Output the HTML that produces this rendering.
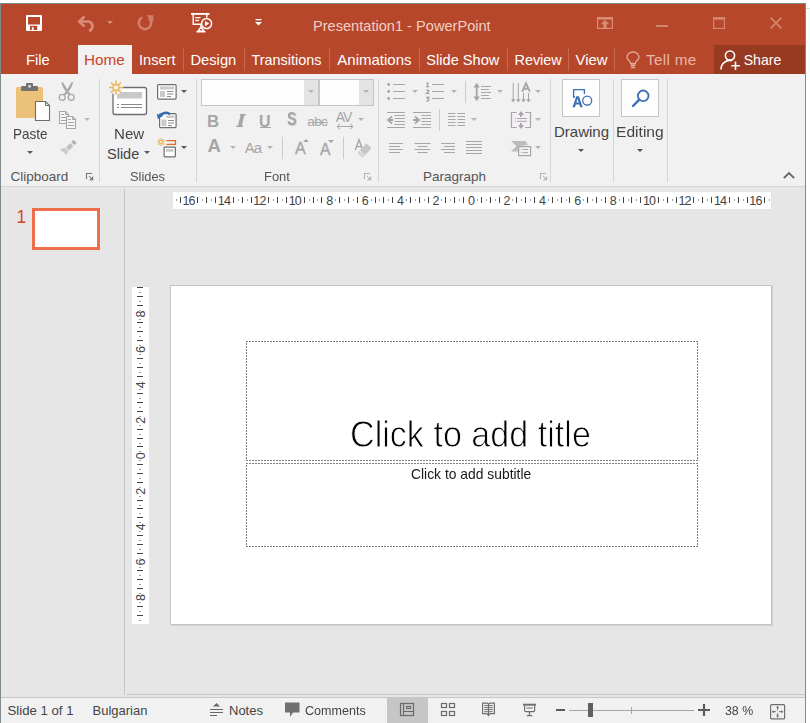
<!DOCTYPE html>
<html><head><meta charset="utf-8">
<style>
html,body{margin:0;padding:0}
body{width:810px;height:723px;overflow:hidden;position:relative;background:#fff;font-family:"Liberation Sans",sans-serif}
.a{position:absolute}
.t{position:absolute;white-space:nowrap;line-height:1}
svg{position:absolute;overflow:visible}
</style></head><body>
<!-- window frame -->
<div class="a" style="left:0;top:3px;width:806px;height:1px;background:#7f8a8c"></div>
<div class="a" style="left:0;top:3px;width:1px;height:720px;background:#7f8a8c"></div>
<div class="a" style="left:805px;top:3px;width:1px;height:720px;background:#7f8a8c"></div>
<div class="a" style="left:806px;top:8px;width:4px;height:1px;background:#dadada"></div>
<!-- title bar + tabs -->
<div class="a" style="left:1px;top:4px;width:804px;height:70px;background:#b7472a"></div>
<!-- ribbon -->
<div class="a" style="left:1px;top:74px;width:804px;height:112px;background:#f1f1f1"></div>
<div class="a" style="left:1px;top:186px;width:804px;height:1px;background:#d5d5d5"></div>
<!-- workspace -->
<div class="a" style="left:1px;top:187px;width:804px;height:510px;background:#e6e6e6"></div>
<div class="a" style="left:124px;top:189px;width:1px;height:506px;background:#c6c6c6"></div>
<div class="a" style="left:127px;top:694px;width:678px;height:1px;background:#c6c6c6"></div>
<!-- status bar -->
<div class="a" style="left:1px;top:697px;width:804px;height:1px;background:#c6c6c6"></div>
<div class="a" style="left:1px;top:698px;width:804px;height:25px;background:#f1f1f1"></div>


<div class="t" style="left:313px;top:18.5px;font-size:14.6px;color:#f0cfc6">Presentation1 - PowerPoint</div>
<!-- save icon -->
<svg style="left:26px;top:15px" width="16" height="16" viewBox="0 0 16 16">
<rect x="0" y="0" width="16" height="16" rx="1" fill="#fff"/>
<rect x="2" y="2" width="12" height="7.5" fill="#b7472a"/>
<rect x="4" y="10.8" width="7.2" height="4.2" fill="#b7472a"/>
<rect x="5.8" y="12.2" width="1.8" height="2.8" fill="#fff"/>
</svg>
<!-- undo -->
<svg style="left:78px;top:16px" width="19" height="15" viewBox="0 0 19 15">
<path d="M2,5.5 H11 A5,5 0 0 1 11,15" fill="none" stroke="#d98d79" stroke-width="2.6"/>
<path d="M6.5,0.5 L1.2,5.5 L6.5,10.5" fill="none" stroke="#d98d79" stroke-width="2.6"/>
</svg>
<svg style="left:107px;top:21px" width="6" height="3" viewBox="0 0 6 3"><path d="M0,0 H6 L3,3 Z" fill="#d98d79"/></svg>
<!-- repeat -->
<svg style="left:137px;top:15px" width="17" height="16" viewBox="0 0 17 16">
<path d="M12,3.2 A6.2,6.2 0 1 1 5.2,2.4" fill="none" stroke="#cf7f6a" stroke-width="2.6"/>
<path d="M9.2,0.2 H16.3 V7 Z" fill="#cf7f6a"/>
</svg>
<!-- slideshow from start -->
<svg style="left:191px;top:13px" width="22" height="20" viewBox="0 0 22 20">
<rect x="0" y="0" width="18.5" height="1.8" fill="#fff"/>
<path d="M2.2,1.5 V11.3 H10.5 M15.8,1.5 V4.5" fill="none" stroke="#fff" stroke-width="1.4"/>
<rect x="4.2" y="4" width="5.3" height="1.3" fill="#fff"/><rect x="4.2" y="6.8" width="3.8" height="1.3" fill="#fff"/>
<path d="M10,11.5 V14.5" stroke="#fff" stroke-width="1.4"/>
<path d="M7,18.2 L10,14 L13,18.2 Z" fill="none" stroke="#fff" stroke-width="1.5"/>
<path d="M5.5,18.8 H14.5" stroke="#fff" stroke-width="1.4"/>
<circle cx="15.6" cy="10.6" r="5" fill="#b7472a" stroke="#fff" stroke-width="1.5"/>
<path d="M14,7.9 L18.2,10.6 L14,13.3 Z" fill="#fff"/>
</svg>
<!-- customize QAT -->
<svg style="left:255px;top:19px" width="7" height="7" viewBox="0 0 7 7"><rect x="0.5" y="0" width="6" height="1.3" fill="#fff"/><path d="M0,3 H7 L3.5,6.5 Z" fill="#fff"/></svg>
<!-- window controls -->
<svg style="left:597px;top:17px" width="16" height="12" viewBox="0 0 16 12">
<rect x="0.6" y="0.6" width="14.8" height="10.8" fill="none" stroke="#d98d79" stroke-width="1.2"/>
<rect x="1" y="1" width="14" height="1.6" fill="#d98d79"/>
<path d="M8,3 L12.3,7.3 H9.6 V11 H6.4 V7.3 H3.7 Z" fill="#d98d79"/>
</svg>
<div class="a" style="left:656px;top:25px;width:12px;height:2px;background:#d38570"></div>
<svg style="left:713px;top:17px" width="12" height="12" viewBox="0 0 12 12">
<rect x="0.6" y="0.6" width="10.8" height="10.8" fill="none" stroke="#d38570" stroke-width="1.2"/>
<rect x="0.6" y="0.6" width="10.8" height="2.2" fill="#d38570"/>
</svg>
<svg style="left:770px;top:17px" width="12" height="12" viewBox="0 0 12 12">
<path d="M0.7,0.7 L11.3,11.3 M11.3,0.7 L0.7,11.3" stroke="#d38570" stroke-width="1.7"/>
</svg>


<div class="a" style="left:78px;top:45px;width:54px;height:29px;background:#f1f1f1"></div>
<div class="a" style="left:714px;top:45px;width:91px;height:29px;background:#983a22"></div>
<div class="t" style="left:26px;top:53.3px;font-size:14.8px;color:#fff">File</div>
<div class="t" style="left:84px;top:51.8px;font-size:15.3px;color:#c8452a">Home</div>
<div class="t" style="left:139px;top:53.3px;font-size:14.6px;color:#fff">Insert</div>
<div class="t" style="left:190.5px;top:53.3px;font-size:14.7px;color:#fff">Design</div>
<div class="t" style="left:251.5px;top:53.3px;font-size:14.4px;color:#fff">Transitions</div>
<div class="t" style="left:337.3px;top:52px;font-size:15px;color:#fff">Animations</div>
<div class="t" style="left:426.3px;top:53.3px;font-size:14.6px;color:#fff">Slide Show</div>
<div class="t" style="left:514.5px;top:53.3px;font-size:14.4px;color:#fff">Review</div>
<div class="t" style="left:575.5px;top:53.3px;font-size:14.9px;color:#fff">View</div>
<div class="t" style="left:646px;top:51.5px;font-size:15.3px;letter-spacing:0.3px;color:#e9b6a8">Tell me</div>
<div class="t" style="left:743.7px;top:53.3px;font-size:14.1px;color:#fff">Share</div>
<div class="a" style="left:183px;top:48px;width:1px;height:23px;background:#c7694f"></div>
<div class="a" style="left:244px;top:48px;width:1px;height:23px;background:#c7694f"></div>
<div class="a" style="left:329px;top:48px;width:1px;height:23px;background:#c7694f"></div>
<div class="a" style="left:419px;top:48px;width:1px;height:23px;background:#c7694f"></div>
<div class="a" style="left:507px;top:48px;width:1px;height:23px;background:#c7694f"></div>
<div class="a" style="left:568px;top:48px;width:1px;height:23px;background:#c7694f"></div>
<div class="a" style="left:614px;top:48px;width:1px;height:23px;background:#c7694f"></div>
<!-- lightbulb -->
<svg style="left:626px;top:52px" width="14" height="17" viewBox="0 0 14 17">
<path d="M4.6,11.5 C4.6,8.8 1,7.8 1,5.4 A6,5.4 0 0 1 13,5.4 C13,7.8 9.4,8.8 9.4,11.5 Z" fill="none" stroke="#e2a998" stroke-width="1.3"/>
<path d="M4.5,13.2 H9.5" stroke="#e2a998" stroke-width="1.6"/>
<path d="M5,15.4 H9" stroke="#e2a998" stroke-width="1.8"/>
</svg>
<!-- share person -->
<svg style="left:720px;top:50px" width="21" height="20" viewBox="0 0 21 20">
<circle cx="10" cy="5.6" r="4.6" fill="none" stroke="#fff" stroke-width="1.6"/>
<path d="M1,19.5 A9,9 0 0 1 12,10.6" fill="none" stroke="#fff" stroke-width="1.6"/>
<path d="M15.5,11.5 V20 M11.3,15.8 H19.8" stroke="#fff" stroke-width="1.6"/>
</svg>


<!-- group separators -->
<div class="a" style="left:99px;top:79px;width:1px;height:103px;background:#d6d6d6"></div>
<div class="a" style="left:196px;top:79px;width:1px;height:103px;background:#d6d6d6"></div>
<div class="a" style="left:378px;top:79px;width:1px;height:103px;background:#d6d6d6"></div>
<div class="a" style="left:550px;top:79px;width:1px;height:103px;background:#d6d6d6"></div>
<div class="a" style="left:613px;top:79px;width:1px;height:103px;background:#d6d6d6"></div>
<div class="a" style="left:667px;top:79px;width:1px;height:103px;background:#d6d6d6"></div>
<!-- group labels -->
<div class="t" style="left:10.5px;top:170px;font-size:13.5px;color:#555">Clipboard</div>
<div class="t" style="left:130px;top:170px;font-size:13.5px;color:#555;transform:scaleX(.95);transform-origin:0 0">Slides</div>
<div class="t" style="left:264px;top:170px;font-size:13.5px;color:#555;transform:scaleX(.96);transform-origin:0 0">Font</div>
<div class="t" style="left:423px;top:170px;font-size:13.5px;color:#555">Paragraph</div>
<!-- launchers -->
<svg style="left:86px;top:173px" width="8" height="8" viewBox="0 0 8 8"><path d="M0.5,6 V0.5 H6" fill="none" stroke="#747474" stroke-width="1.1"/><path d="M7.2,3 V7.2 H3 Z" fill="#747474"/><path d="M3,3 L5.5,5.5" stroke="#747474" stroke-width="1"/></svg>
<svg style="left:364px;top:173px" width="8" height="8" viewBox="0 0 8 8"><path d="M0.5,6 V0.5 H6" fill="none" stroke="#b4b4b4" stroke-width="1.1"/><path d="M7.2,3 V7.2 H3 Z" fill="#b4b4b4"/><path d="M3,3 L5.5,5.5" stroke="#b4b4b4" stroke-width="1"/></svg>
<svg style="left:540px;top:173px" width="8" height="8" viewBox="0 0 8 8"><path d="M0.5,6 V0.5 H6" fill="none" stroke="#b4b4b4" stroke-width="1.1"/><path d="M7.2,3 V7.2 H3 Z" fill="#b4b4b4"/><path d="M3,3 L5.5,5.5" stroke="#b4b4b4" stroke-width="1"/></svg>
<!-- chevron collapse -->
<svg style="left:783px;top:171px" width="12" height="8" viewBox="0 0 12 8"><path d="M0.8,7.2 L6,2 L11.2,7.2" fill="none" stroke="#666" stroke-width="1.9"/></svg>

<!-- ===== Clipboard ===== -->
<svg style="left:15px;top:82px" width="36" height="40" viewBox="0 0 36 40">
<rect x="1" y="5" width="27" height="31" rx="1.5" fill="#ecc27a"/>
<rect x="6" y="4" width="17" height="5" rx="1" fill="#737373"/>
<rect x="11" y="1" width="7" height="5" rx="0.8" fill="#737373"/>
<rect x="13.4" y="3.2" width="2.4" height="2.2" fill="#f1f1f1"/>
<path d="M20.5,19.5 H30.5 L34.5,23.5 V38.5 H20.5 Z" fill="#fff" stroke="#6d6d6d" stroke-width="1.1"/>
<path d="M30.5,19.5 V23.5 H34.5" fill="none" stroke="#6d6d6d" stroke-width="1"/>
</svg>
<div class="t" style="left:13px;top:126.5px;font-size:14.5px;color:#444;transform:scaleX(.93);transform-origin:0 0">Paste</div>
<svg style="left:27px;top:151px" width="6" height="3" viewBox="0 0 6 3"><path d="M0,0 H6 L3,3 Z" fill="#5a5a5a"/></svg>
<!-- scissors -->
<svg style="left:58px;top:82px" width="18" height="20" viewBox="0 0 18 20">
<circle cx="4.2" cy="15.3" r="3" fill="none" stroke="#a6a6a6" stroke-width="1.3"/>
<circle cx="13.2" cy="15.3" r="3" fill="none" stroke="#a6a6a6" stroke-width="1.3"/>
<path d="M3.8,0.8 Q5,6.5 11.2,13 L12,12 Q7.5,6 4.6,0.5 Z M14.6,0.8 Q13.4,6.5 7.2,13 L6.4,12 Q10.9,6 13.8,0.5 Z" fill="#a6a6a6" stroke="#a6a6a6" stroke-width="0.9"/>
</svg>
<!-- copy -->
<svg style="left:58px;top:110px" width="20" height="20" viewBox="0 0 20 20">
<path d="M1.5,1.5 H7.5 L10.5,4.5 V13.5 H1.5 Z" fill="#f8f5f8" stroke="#a6a6a6" stroke-width="1.1"/>
<path d="M7.5,1.5 V4.5 H10.5" fill="none" stroke="#a6a6a6" stroke-width="1"/>
<path d="M3,4.5 H6 M3,7.5 H8 M3,10.5 H8" stroke="#a6a6a6" stroke-width="1"/>
<path d="M8.5,6.5 H14.5 L17.5,9.5 V18.5 H8.5 Z" fill="#f8f5f8" stroke="#a6a6a6" stroke-width="1.1"/>
<path d="M14.5,6.5 V9.5 H17.5" fill="none" stroke="#a6a6a6" stroke-width="1"/>
<path d="M10,9.5 H13 M10,12.5 H16 M10,15.5 H16" stroke="#a6a6a6" stroke-width="1"/>
</svg>
<svg style="left:84px;top:118px" width="6" height="3" viewBox="0 0 6 3"><path d="M0,0 H6 L3,3 Z" fill="#b9b9b9"/></svg>
<!-- format painter -->
<svg style="left:59px;top:139px" width="19" height="17" viewBox="0 0 19 17">
<path d="M14.5,0.8 L17.6,3.9 L15.4,6.1 L12.3,3 Z" fill="#b0b0b0"/>
<path d="M11.2,4 L14.4,7.2 L10,11.6 L6.8,8.4 Z" fill="#c2c2c2"/>
<path d="M6.2,9 L9.4,12.2 L7.2,15.8 L1,10.6 L2,9.8 Z" fill="#cbcbcb"/>
</svg>

<!-- ===== Slides ===== -->
<svg style="left:108px;top:80px" width="40" height="36" viewBox="0 0 40 36">
<rect x="5" y="7.5" width="33.5" height="27" rx="2" fill="#fff" stroke="#6d6d6d" stroke-width="1.3"/>
<rect x="9" y="12" width="25" height="6.5" fill="#c9c9c9"/>
<path d="M9,24.5 H11 M13,24.5 H34 M9,27.5 H11 M13,27.5 H34" stroke="#8a8a8a" stroke-width="1"/>
<circle cx="8" cy="7.5" r="7.2" fill="#f1f1f1"/>
<g stroke="#eeb75c" stroke-width="1.6">
<path d="M8,0.5 V14.5 M1,7.5 H15 M3,2.5 L13,12.5 M13,2.5 L3,12.5"/>
</g>
<circle cx="8" cy="7.5" r="3" fill="#f1f1f1" stroke="#eeb75c" stroke-width="1.4"/>
</svg>
<div class="t" style="left:114px;top:126.7px;font-size:14.5px;color:#444;transform:scaleX(1.04);transform-origin:0 0">New</div>
<div class="t" style="left:107px;top:146.6px;font-size:14.5px;color:#444">Slide</div>
<svg style="left:144px;top:151px" width="6" height="3" viewBox="0 0 6 3"><path d="M0,0 H6 L3,3 Z" fill="#5a5a5a"/></svg>
<!-- layout -->
<svg style="left:157px;top:84px" width="20" height="16" viewBox="0 0 20 16">
<rect x="0.6" y="0.6" width="18.5" height="14.5" rx="1" fill="#fff" stroke="#6d6d6d" stroke-width="1.2"/>
<rect x="3" y="2.5" width="14" height="3" fill="#c9c9c9"/>
<rect x="3" y="7" width="5" height="6" fill="#c9c9c9"/>
<path d="M10,7.5 H16.5 M10,10 H16.5 M10,12.5 H14" stroke="#8a8a8a" stroke-width="1"/>
</svg>
<svg style="left:181px;top:90px" width="6" height="3" viewBox="0 0 6 3"><path d="M0,0 H6 L3,3 Z" fill="#5a5a5a"/></svg>
<!-- reset -->
<svg style="left:157px;top:110px" width="20" height="19" viewBox="0 0 20 19">
<rect x="2.6" y="3.6" width="16.5" height="14" rx="1" fill="#fff" stroke="#6d6d6d" stroke-width="1.2"/>
<rect x="4.5" y="9.5" width="5" height="6.5" fill="#c9c9c9"/>
<rect x="9" y="5.5" width="8.5" height="2.5" fill="#c9c9c9"/>
<path d="M11,10.5 H17 M11,13 H17 M11,15.5 H15" stroke="#8a8a8a" stroke-width="1"/>
<path d="M3.8,6.5 A5.2,4.6 0 0 1 13,4.5" fill="none" stroke="#2f6db5" stroke-width="2.3"/>
<path d="M-0.3,4 L6.2,5.5 L1,9.3 Z" fill="#2f6db5"/>
</svg>
<!-- section -->
<svg style="left:157px;top:138px" width="20" height="20" viewBox="0 0 20 20">
<g stroke="#eeb75c" stroke-width="1.2"><path d="M4,0 V8 M0,4 H8 M1.2,1.2 L6.8,6.8 M6.8,1.2 L1.2,6.8"/></g>
<circle cx="4" cy="4" r="1.6" fill="#f1f1f1" stroke="#eeb75c" stroke-width="1"/>
<path d="M9.5,2.6 H18.5 V6.4 H9.5" fill="none" stroke="#e9671f" stroke-width="1.2"/>
<rect x="7.1" y="9.1" width="11.3" height="9.8" rx="0.8" fill="#fff" stroke="#6d6d6d" stroke-width="1.2"/>
<rect x="9" y="11" width="7.5" height="2.8" fill="#c9c9c9"/>
</svg>
<svg style="left:181px;top:146px" width="6" height="3" viewBox="0 0 6 3"><path d="M0,0 H6 L3,3 Z" fill="#5a5a5a"/></svg>


<!-- ===== Font ===== -->
<div class="a" style="left:201px;top:79px;width:116px;height:25px;border:1px solid #c6c6c6;background:#fdfdfd"></div>
<div class="a" style="left:304px;top:80px;width:14px;height:25px;background:#e3e3e3"></div>
<div class="a" style="left:319px;top:79px;width:53px;height:25px;border:1px solid #c6c6c6;background:#fdfdfd"></div>
<div class="a" style="left:359px;top:80px;width:14px;height:25px;background:#e3e3e3"></div>
<svg style="left:308px;top:90px" width="6" height="3" viewBox="0 0 6 3"><path d="M0,0 H6 L3,3 Z" fill="#b3b3b3"/></svg>
<svg style="left:363px;top:90px" width="6" height="3" viewBox="0 0 6 3"><path d="M0,0 H6 L3,3 Z" fill="#b3b3b3"/></svg>

<div class="t" style="left:207px;top:113.6px;font-size:16.8px;font-weight:bold;color:#a6a6a6">B</div>
<svg style="left:236px;top:114px" width="10" height="13" viewBox="0 0 10 13"><path d="M4,0 H10 L9.7,1.6 H8.3 L5.8,11.4 H7.2 L6.8,13 H0 L0.4,11.4 H2 L4.5,1.6 H3.7 Z" fill="#a6a6a6"/></svg>
<div class="t" style="left:259px;top:113.5px;font-size:16px;font-weight:bold;color:#a6a6a6">U</div>
<div class="a" style="left:260px;top:127px;width:11px;height:1.3px;background:#a6a6a6"></div>
<div class="t" style="left:288.3px;top:111.8px;font-size:17.5px;font-weight:bold;color:#d0d0d0;transform:scaleX(.82);transform-origin:0 0;filter:blur(0.5px)">S</div>
<div class="t" style="left:287px;top:110.5px;font-size:17.5px;font-weight:bold;color:#a6a6a6;transform:scaleX(.82);transform-origin:0 0">S</div>
<div class="t" style="left:307.3px;top:115.3px;font-size:13.5px;color:#a6a6a6;letter-spacing:-0.6px">abc</div>
<div class="a" style="left:308px;top:122px;width:20px;height:1.2px;background:#a6a6a6"></div>
<div class="t" style="left:335.8px;top:110.3px;font-size:14px;color:#a6a6a6;letter-spacing:-1.2px">AV</div>
<svg style="left:336px;top:123px" width="18" height="7" viewBox="0 0 18 7"><path d="M1,3.5 H17 M4,0.8 L1,3.5 L4,6.2 M14,0.8 L17,3.5 L14,6.2" fill="none" stroke="#a6a6a6" stroke-width="1"/></svg>
<svg style="left:358px;top:118px" width="6" height="3" viewBox="0 0 6 3"><path d="M0,0 H6 L3,3 Z" fill="#b3b3b3"/></svg>

<div class="t" style="left:207.5px;top:137.2px;font-size:18.5px;font-weight:bold;color:#a6a6a6">A</div>
<svg style="left:230px;top:146px" width="6" height="3" viewBox="0 0 6 3"><path d="M0,0 H6 L3,3 Z" fill="#b3b3b3"/></svg>

<div class="t" style="left:244.7px;top:139.8px;font-size:15px;color:#a6a6a6;letter-spacing:-1px">Aa</div>
<svg style="left:267px;top:146px" width="6" height="3" viewBox="0 0 6 3"><path d="M0,0 H6 L3,3 Z" fill="#b3b3b3"/></svg>

<div class="a" style="left:282px;top:137px;width:1px;height:22px;background:#cdcdcd"></div>
<div class="t" style="left:295px;top:141.2px;font-size:16px;color:#a6a6a6;-webkit-text-stroke:0.35px #a6a6a6">A</div>
<svg style="left:303px;top:139px" width="6" height="3" viewBox="0 0 6 3"><path d="M0,3 H6 L3,0 Z" fill="#a6a6a6"/></svg>
<div class="t" style="left:320px;top:141.8px;font-size:15.6px;color:#a6a6a6;-webkit-text-stroke:0.35px #a6a6a6">A</div>
<svg style="left:328px;top:140px" width="6" height="3" viewBox="0 0 6 3"><path d="M0,0 H6 L3,3 Z" fill="#a6a6a6"/></svg>
<div class="a" style="left:343px;top:137px;width:1px;height:22px;background:#cdcdcd"></div>
<svg style="left:354px;top:139px" width="18" height="19" viewBox="0 0 18 19">
<path d="M1.3,11 L5,0.8 L8.7,11 M2.6,7.6 H7.4" fill="none" stroke="#a6a6a6" stroke-width="1.4"/>
<g transform="rotate(45 10.5 11.5)"><rect x="7" y="5" width="7" height="13" rx="1.2" fill="#c6c6c6"/><rect x="7" y="15.2" width="7" height="2.8" fill="#d4d4d4"/><rect x="7" y="14.6" width="7" height="0.8" fill="#f1f1f1"/></g>
</svg>

<!-- ===== Paragraph ===== -->
<svg style="left:386px;top:82px" width="20" height="19" viewBox="0 0 20 19">
<g fill="#a6a6a6"><circle cx="2.6" cy="2.5" r="1.4"/><circle cx="2.6" cy="9.5" r="1.4"/><circle cx="2.6" cy="16.5" r="1.4"/></g>
<path d="M7,2.5 H19 M7,9.5 H19 M7,16.5 H19" stroke="#a6a6a6" stroke-width="1.1"/>
</svg>
<svg style="left:412px;top:90px" width="6" height="3" viewBox="0 0 6 3"><path d="M0,0 H6 L3,3 Z" fill="#b3b3b3"/></svg>

<svg style="left:425px;top:81px" width="20" height="20" viewBox="0 0 20 20">
<path d="M1.3,2.8 L2.8,2 V5.6 M1.2,5.6 H4.2" fill="none" stroke="#9c9c9c" stroke-width="1.1"/>
<path d="M1.2,9.5 Q2,9 3,9 Q4.2,9.3 3.8,10.4 L1.3,12.5 H4.3" fill="none" stroke="#9c9c9c" stroke-width="1.1"/>
<path d="M1.2,16.4 H4 L2.6,17.8 Q4.3,18 4,19.3 Q3.5,20.4 1.2,20" fill="none" stroke="#9c9c9c" stroke-width="1.1"/>
<path d="M7,3.5 H19 M7,10.5 H19 M7,17.5 H19" stroke="#a6a6a6" stroke-width="1.1"/>
</svg>
<svg style="left:451px;top:90px" width="6" height="3" viewBox="0 0 6 3"><path d="M0,0 H6 L3,3 Z" fill="#b3b3b3"/></svg>

<div class="a" style="left:465px;top:81px;width:1px;height:22px;background:#cdcdcd"></div>
<svg style="left:472px;top:82px" width="20" height="20" viewBox="0 0 20 20">
<path d="M4.7,4 V16" stroke="#a6a6a6" stroke-width="1.8"/>
<path d="M1.5,5.5 L4.7,0.8 L7.9,5.5 Z M1.5,14.5 L4.7,19.3 L7.9,14.5 Z" fill="#a6a6a6"/>
<path d="M9,4.5 H19 M9,7.5 H17 M9,10.5 H19 M9,13.5 H17 M9,16.5 H19" stroke="#a6a6a6" stroke-width="1.1"/>
</svg>
<svg style="left:497px;top:90px" width="6" height="3" viewBox="0 0 6 3"><path d="M0,0 H6 L3,3 Z" fill="#b3b3b3"/></svg>

<svg style="left:511px;top:82px" width="22" height="21" viewBox="0 0 22 21">
<path d="M2.2,1 V19 M7.3,1 V19 M12.5,11 V19 M17.5,11 V19" stroke="#a6a6a6" stroke-width="1"/>
<path d="M0.7,17.5 L2.2,20 L3.7,17.5 Z M5.8,17.5 L7.3,20 L8.8,17.5 Z M11,17.5 L12.5,20 L14,17.5 Z M16,17.5 L17.5,20 L19,17.5 Z" fill="#a6a6a6" stroke="#a6a6a6" stroke-width="0.8"/>
<path d="M11.2,9.6 L15,1.2 L18.8,9.6 M12.4,6.8 H17.6" fill="none" stroke="#a6a6a6" stroke-width="1.9"/>
</svg>
<svg style="left:535px;top:90px" width="6" height="3" viewBox="0 0 6 3"><path d="M0,0 H6 L3,3 Z" fill="#b3b3b3"/></svg>

<svg style="left:386px;top:111px" width="20" height="18" viewBox="0 0 20 18">
<path d="M1,1.5 H19 M1,16.5 H19 M8.5,4.5 H19 M8.5,7.5 H19 M8.5,10.5 H19 M8.5,13.5 H19" stroke="#a6a6a6" stroke-width="1.1"/>
<path d="M6,5.5 L2,9 L6,12.5 M2,9 H7" fill="none" stroke="#a6a6a6" stroke-width="1.8"/>
</svg>
<svg style="left:412px;top:111px" width="20" height="18" viewBox="0 0 20 18">
<path d="M1,1.5 H19 M1,16.5 H19 M9.5,4.5 H19 M9.5,7.5 H19 M9.5,10.5 H19 M9.5,13.5 H19" stroke="#a6a6a6" stroke-width="1.1"/>
<path d="M3,5.5 L7,9 L3,12.5 M1,9 H7" fill="none" stroke="#a6a6a6" stroke-width="1.8"/>
</svg>
<div class="a" style="left:439px;top:109px;width:1px;height:22px;background:#cdcdcd"></div>
<svg style="left:448px;top:113px" width="18" height="14" viewBox="0 0 18 14">
<path d="M0,0.5 H7.5 M0,3.5 H7.5 M0,6.5 H7.5 M0,9.5 H7.5 M0,12.5 H7.5 M9.5,0.5 H17 M9.5,3.5 H17 M9.5,6.5 H17 M9.5,9.5 H17 M9.5,12.5 H17" stroke="#a6a6a6" stroke-width="1.1"/>
</svg>
<svg style="left:471px;top:118px" width="6" height="3" viewBox="0 0 6 3"><path d="M0,0 H6 L3,3 Z" fill="#b3b3b3"/></svg>

<svg style="left:510px;top:110px" width="22" height="20" viewBox="0 0 22 20">
<rect x="1.5" y="2.5" width="19" height="15" fill="#f5eff5"/>
<path d="M6.8,2.5 H1.5 V17.5 H6.8 M15.2,2.5 H20.5 V17.5 H15.2" fill="none" stroke="#a6a6a6" stroke-width="1.2"/>
<path d="M11,4 V7 M11,13 V16" stroke="#a6a6a6" stroke-width="1.8"/>
<path d="M8,5 L11,1 L14,5 Z M8,15 L11,19 L14,15 Z" fill="#a6a6a6"/>
<path d="M5,8.5 H6 M7.2,8.5 H17 M5,11.3 H6 M7.2,11.3 H17" stroke="#a6a6a6" stroke-width="1"/>
</svg>
<svg style="left:535px;top:118px" width="6" height="3" viewBox="0 0 6 3"><path d="M0,0 H6 L3,3 Z" fill="#b3b3b3"/></svg>

<svg style="left:388px;top:142px" width="16" height="12" viewBox="0 0 16 12"><path d="M1,1.5 H15 M1,4.5 H12 M1,7.5 H15 M1,10.5 H12" stroke="#a6a6a6" stroke-width="1.1"/></svg>
<svg style="left:414px;top:142px" width="17" height="12" viewBox="0 0 17 12"><path d="M0.5,1.5 H16.5 M3.5,4.5 H13.5 M0.5,7.5 H16.5 M3.5,10.5 H13.5" stroke="#a6a6a6" stroke-width="1.1"/></svg>
<svg style="left:440px;top:142px" width="16" height="12" viewBox="0 0 16 12"><path d="M1,1.5 H15 M4,4.5 H15 M1,7.5 H15 M4,10.5 H15" stroke="#a6a6a6" stroke-width="1.1"/></svg>
<svg style="left:466px;top:140px" width="17" height="15" viewBox="0 0 17 15"><path d="M0,1.5 H16 M0,4.5 H16 M0,7.5 H16 M0,10.5 H16 M0,13.5 H16" stroke="#a6a6a6" stroke-width="1.1"/></svg>
<svg style="left:510px;top:140px" width="22" height="17" viewBox="0 0 22 17">
<path d="M1,1 H15.5 L18,5 L9,6 L7.5,11.5 H1 L6.5,6.2 Z" fill="#bcbcbc"/>
<rect x="8.6" y="6.6" width="12" height="9" fill="#f5eff5" stroke="#a6a6a6" stroke-width="1.2"/>
<path d="M11,9.5 H12 M13,9.5 H18 M11,12.6 H12 M13,12.6 H18" stroke="#a6a6a6" stroke-width="1"/>
</svg>
<svg style="left:535px;top:146px" width="6" height="3" viewBox="0 0 6 3"><path d="M0,0 H6 L3,3 Z" fill="#b3b3b3"/></svg>


<!-- ===== Drawing / Editing ===== -->
<div class="a" style="left:562px;top:79px;width:36px;height:36px;border:1px solid #c6c6c6;background:#fdfdfd"></div>
<div class="a" style="left:621px;top:79px;width:36px;height:36px;border:1px solid #c6c6c6;background:#fdfdfd"></div>
<svg style="left:572px;top:88px" width="21" height="21" viewBox="0 0 21 21">
<path d="M3,9 H1.6 V1.6 H12.4 V6" fill="none" stroke="#3c6fb5" stroke-width="1.3"/>
<circle cx="15.2" cy="12.6" r="4.5" fill="none" stroke="#3c6fb5" stroke-width="1.3"/>
<path d="M0.5,19.3 L4.3,8.3 H6.9 L10.7,19.3 H8.2 L7.4,16.6 H3.8 L3,19.3 Z M4.4,14.5 H6.8 L5.6,10.7 Z" fill="#3c6fb5" fill-rule="evenodd"/>
</svg>
<svg style="left:631px;top:88px" width="20" height="20" viewBox="0 0 20 20">
<circle cx="12.2" cy="7.8" r="5.3" fill="none" stroke="#3c6fb5" stroke-width="1.8"/>
<path d="M8.3,11.7 L2,18" stroke="#3c6fb5" stroke-width="2.4" stroke-linecap="round"/>
</svg>
<div class="t" style="left:554px;top:123.5px;font-size:15px;color:#444">Drawing</div>
<div class="t" style="left:616px;top:123.5px;font-size:15px;color:#444;transform:scaleX(1.04);transform-origin:0 0">Editing</div>
<svg style="left:578px;top:149px" width="6" height="3" viewBox="0 0 6 3"><path d="M0,0 H6 L3,3 Z" fill="#555"/></svg>
<svg style="left:637px;top:149px" width="6" height="3" viewBox="0 0 6 3"><path d="M0,0 H6 L3,3 Z" fill="#555"/></svg>

<!--RIBBON-->

<!-- thumbnail -->
<div class="t" style="left:16.5px;top:208.5px;font-size:17.5px;color:#d24726">1</div>
<div class="a" style="left:32px;top:208px;width:62px;height:36px;border:3px solid #ef6f4c;background:#fff"></div>
<!-- slide -->
<div class="a" style="left:170px;top:285px;width:600px;height:338px;border:1px solid #c3c3c3;background:#fff;box-shadow:1px 1px 1px rgba(0,0,0,0.08)"></div>
<svg style="left:0;top:0" width="810" height="723" viewBox="0 0 810 723">
<rect x="173" y="192" width="598" height="17" fill="#fff"/>
<rect x="176" y="199" width="1" height="2" fill="#9a9a9a"/>
<rect x="180" y="197" width="1" height="6" fill="#444"/>
<rect x="185" y="199" width="1" height="2" fill="#9a9a9a"/>
<rect x="193" y="199" width="1" height="2" fill="#9a9a9a"/>
<rect x="197" y="197" width="1" height="6" fill="#444"/>
<rect x="202" y="199" width="1" height="2" fill="#9a9a9a"/>
<rect x="206" y="197" width="1" height="6" fill="#444"/>
<rect x="211" y="199" width="1" height="2" fill="#9a9a9a"/>
<rect x="215" y="197" width="1" height="6" fill="#444"/>
<rect x="220" y="199" width="1" height="2" fill="#9a9a9a"/>
<rect x="229" y="199" width="1" height="2" fill="#9a9a9a"/>
<rect x="233" y="197" width="1" height="6" fill="#444"/>
<rect x="238" y="199" width="1" height="2" fill="#9a9a9a"/>
<rect x="242" y="197" width="1" height="6" fill="#444"/>
<rect x="247" y="199" width="1" height="2" fill="#9a9a9a"/>
<rect x="251" y="197" width="1" height="6" fill="#444"/>
<rect x="255" y="199" width="1" height="2" fill="#9a9a9a"/>
<rect x="264" y="199" width="1" height="2" fill="#9a9a9a"/>
<rect x="268" y="197" width="1" height="6" fill="#444"/>
<rect x="273" y="199" width="1" height="2" fill="#9a9a9a"/>
<rect x="277" y="197" width="1" height="6" fill="#444"/>
<rect x="282" y="199" width="1" height="2" fill="#9a9a9a"/>
<rect x="286" y="197" width="1" height="6" fill="#444"/>
<rect x="291" y="199" width="1" height="2" fill="#9a9a9a"/>
<rect x="300" y="199" width="1" height="2" fill="#9a9a9a"/>
<rect x="304" y="197" width="1" height="6" fill="#444"/>
<rect x="309" y="199" width="1" height="2" fill="#9a9a9a"/>
<rect x="313" y="197" width="1" height="6" fill="#444"/>
<rect x="317" y="199" width="1" height="2" fill="#9a9a9a"/>
<rect x="321" y="197" width="1" height="6" fill="#444"/>
<rect x="326" y="199" width="1" height="2" fill="#9a9a9a"/>
<rect x="335" y="199" width="1" height="2" fill="#9a9a9a"/>
<rect x="339" y="197" width="1" height="6" fill="#444"/>
<rect x="344" y="199" width="1" height="2" fill="#9a9a9a"/>
<rect x="348" y="197" width="1" height="6" fill="#444"/>
<rect x="353" y="199" width="1" height="2" fill="#9a9a9a"/>
<rect x="357" y="197" width="1" height="6" fill="#444"/>
<rect x="362" y="199" width="1" height="2" fill="#9a9a9a"/>
<rect x="371" y="199" width="1" height="2" fill="#9a9a9a"/>
<rect x="375" y="197" width="1" height="6" fill="#444"/>
<rect x="379" y="199" width="1" height="2" fill="#9a9a9a"/>
<rect x="383" y="197" width="1" height="6" fill="#444"/>
<rect x="388" y="199" width="1" height="2" fill="#9a9a9a"/>
<rect x="392" y="197" width="1" height="6" fill="#444"/>
<rect x="397" y="199" width="1" height="2" fill="#9a9a9a"/>
<rect x="406" y="199" width="1" height="2" fill="#9a9a9a"/>
<rect x="410" y="197" width="1" height="6" fill="#444"/>
<rect x="415" y="199" width="1" height="2" fill="#9a9a9a"/>
<rect x="419" y="197" width="1" height="6" fill="#444"/>
<rect x="424" y="199" width="1" height="2" fill="#9a9a9a"/>
<rect x="428" y="197" width="1" height="6" fill="#444"/>
<rect x="433" y="199" width="1" height="2" fill="#9a9a9a"/>
<rect x="441" y="199" width="1" height="2" fill="#9a9a9a"/>
<rect x="445" y="197" width="1" height="6" fill="#444"/>
<rect x="450" y="199" width="1" height="2" fill="#9a9a9a"/>
<rect x="454" y="197" width="1" height="6" fill="#444"/>
<rect x="459" y="199" width="1" height="2" fill="#9a9a9a"/>
<rect x="463" y="197" width="1" height="6" fill="#444"/>
<rect x="468" y="199" width="1" height="2" fill="#9a9a9a"/>
<rect x="477" y="199" width="1" height="2" fill="#9a9a9a"/>
<rect x="481" y="197" width="1" height="6" fill="#444"/>
<rect x="486" y="199" width="1" height="2" fill="#9a9a9a"/>
<rect x="490" y="197" width="1" height="6" fill="#444"/>
<rect x="495" y="199" width="1" height="2" fill="#9a9a9a"/>
<rect x="499" y="197" width="1" height="6" fill="#444"/>
<rect x="504" y="199" width="1" height="2" fill="#9a9a9a"/>
<rect x="512" y="199" width="1" height="2" fill="#9a9a9a"/>
<rect x="516" y="197" width="1" height="6" fill="#444"/>
<rect x="521" y="199" width="1" height="2" fill="#9a9a9a"/>
<rect x="525" y="197" width="1" height="6" fill="#444"/>
<rect x="530" y="199" width="1" height="2" fill="#9a9a9a"/>
<rect x="534" y="197" width="1" height="6" fill="#444"/>
<rect x="539" y="199" width="1" height="2" fill="#9a9a9a"/>
<rect x="548" y="199" width="1" height="2" fill="#9a9a9a"/>
<rect x="552" y="197" width="1" height="6" fill="#444"/>
<rect x="557" y="199" width="1" height="2" fill="#9a9a9a"/>
<rect x="561" y="197" width="1" height="6" fill="#444"/>
<rect x="566" y="199" width="1" height="2" fill="#9a9a9a"/>
<rect x="569" y="197" width="1" height="6" fill="#444"/>
<rect x="574" y="199" width="1" height="2" fill="#9a9a9a"/>
<rect x="583" y="199" width="1" height="2" fill="#9a9a9a"/>
<rect x="587" y="197" width="1" height="6" fill="#444"/>
<rect x="592" y="199" width="1" height="2" fill="#9a9a9a"/>
<rect x="596" y="197" width="1" height="6" fill="#444"/>
<rect x="601" y="199" width="1" height="2" fill="#9a9a9a"/>
<rect x="605" y="197" width="1" height="6" fill="#444"/>
<rect x="610" y="199" width="1" height="2" fill="#9a9a9a"/>
<rect x="619" y="199" width="1" height="2" fill="#9a9a9a"/>
<rect x="623" y="197" width="1" height="6" fill="#444"/>
<rect x="628" y="199" width="1" height="2" fill="#9a9a9a"/>
<rect x="631" y="197" width="1" height="6" fill="#444"/>
<rect x="636" y="199" width="1" height="2" fill="#9a9a9a"/>
<rect x="640" y="197" width="1" height="6" fill="#444"/>
<rect x="645" y="199" width="1" height="2" fill="#9a9a9a"/>
<rect x="654" y="199" width="1" height="2" fill="#9a9a9a"/>
<rect x="658" y="197" width="1" height="6" fill="#444"/>
<rect x="663" y="199" width="1" height="2" fill="#9a9a9a"/>
<rect x="667" y="197" width="1" height="6" fill="#444"/>
<rect x="672" y="199" width="1" height="2" fill="#9a9a9a"/>
<rect x="676" y="197" width="1" height="6" fill="#444"/>
<rect x="681" y="199" width="1" height="2" fill="#9a9a9a"/>
<rect x="690" y="199" width="1" height="2" fill="#9a9a9a"/>
<rect x="693" y="197" width="1" height="6" fill="#444"/>
<rect x="698" y="199" width="1" height="2" fill="#9a9a9a"/>
<rect x="702" y="197" width="1" height="6" fill="#444"/>
<rect x="707" y="199" width="1" height="2" fill="#9a9a9a"/>
<rect x="711" y="197" width="1" height="6" fill="#444"/>
<rect x="716" y="199" width="1" height="2" fill="#9a9a9a"/>
<rect x="725" y="199" width="1" height="2" fill="#9a9a9a"/>
<rect x="729" y="197" width="1" height="6" fill="#444"/>
<rect x="734" y="199" width="1" height="2" fill="#9a9a9a"/>
<rect x="738" y="197" width="1" height="6" fill="#444"/>
<rect x="743" y="199" width="1" height="2" fill="#9a9a9a"/>
<rect x="747" y="197" width="1" height="6" fill="#444"/>
<rect x="752" y="199" width="1" height="2" fill="#9a9a9a"/>
<rect x="760" y="199" width="1" height="2" fill="#9a9a9a"/>
<rect x="764" y="197" width="1" height="6" fill="#444"/>
<rect x="769" y="199" width="1" height="2" fill="#9a9a9a"/>
<rect x="181.8" y="194" width="12.5" height="13" fill="#fff"/>
<text x="188.5" y="205" font-size="12.5" fill="#444" text-anchor="middle" font-family="Liberation Sans" letter-spacing="-0.9">16</text>
<rect x="217.2" y="194" width="12.5" height="13" fill="#fff"/>
<text x="223.9" y="205" font-size="12.5" fill="#444" text-anchor="middle" font-family="Liberation Sans" letter-spacing="-0.9">14</text>
<rect x="252.7" y="194" width="12.5" height="13" fill="#fff"/>
<text x="259.4" y="205" font-size="12.5" fill="#444" text-anchor="middle" font-family="Liberation Sans" letter-spacing="-0.9">12</text>
<rect x="288.1" y="194" width="12.5" height="13" fill="#fff"/>
<text x="294.8" y="205" font-size="12.5" fill="#444" text-anchor="middle" font-family="Liberation Sans" letter-spacing="-0.9">10</text>
<rect x="326.0" y="194" width="7.5" height="13" fill="#fff"/>
<text x="329.8" y="205" font-size="12.5" fill="#444" text-anchor="middle" font-family="Liberation Sans">8</text>
<rect x="361.5" y="194" width="7.5" height="13" fill="#fff"/>
<text x="365.2" y="205" font-size="12.5" fill="#444" text-anchor="middle" font-family="Liberation Sans">6</text>
<rect x="396.9" y="194" width="7.5" height="13" fill="#fff"/>
<text x="400.6" y="205" font-size="12.5" fill="#444" text-anchor="middle" font-family="Liberation Sans">4</text>
<rect x="432.3" y="194" width="7.5" height="13" fill="#fff"/>
<text x="436.1" y="205" font-size="12.5" fill="#444" text-anchor="middle" font-family="Liberation Sans">2</text>
<rect x="467.8" y="194" width="7.5" height="13" fill="#fff"/>
<text x="471.5" y="205" font-size="12.5" fill="#444" text-anchor="middle" font-family="Liberation Sans">0</text>
<rect x="503.2" y="194" width="7.5" height="13" fill="#fff"/>
<text x="506.9" y="205" font-size="12.5" fill="#444" text-anchor="middle" font-family="Liberation Sans">2</text>
<rect x="538.6" y="194" width="7.5" height="13" fill="#fff"/>
<text x="542.4" y="205" font-size="12.5" fill="#444" text-anchor="middle" font-family="Liberation Sans">4</text>
<rect x="574.0" y="194" width="7.5" height="13" fill="#fff"/>
<text x="577.8" y="205" font-size="12.5" fill="#444" text-anchor="middle" font-family="Liberation Sans">6</text>
<rect x="609.5" y="194" width="7.5" height="13" fill="#fff"/>
<text x="613.2" y="205" font-size="12.5" fill="#444" text-anchor="middle" font-family="Liberation Sans">8</text>
<rect x="642.4" y="194" width="12.5" height="13" fill="#fff"/>
<text x="649.1" y="205" font-size="12.5" fill="#444" text-anchor="middle" font-family="Liberation Sans" letter-spacing="-0.9">10</text>
<rect x="677.8" y="194" width="12.5" height="13" fill="#fff"/>
<text x="684.5" y="205" font-size="12.5" fill="#444" text-anchor="middle" font-family="Liberation Sans" letter-spacing="-0.9">12</text>
<rect x="713.3" y="194" width="12.5" height="13" fill="#fff"/>
<text x="720.0" y="205" font-size="12.5" fill="#444" text-anchor="middle" font-family="Liberation Sans" letter-spacing="-0.9">14</text>
<rect x="748.7" y="194" width="12.5" height="13" fill="#fff"/>
<text x="755.4" y="205" font-size="12.5" fill="#444" text-anchor="middle" font-family="Liberation Sans" letter-spacing="-0.9">16</text>
<rect x="132" y="287" width="17" height="337" fill="#fff"/>
<rect x="137" y="287" width="6" height="1" fill="#444"/>
<rect x="139" y="292" width="2" height="1" fill="#9a9a9a"/>
<rect x="137" y="296" width="6" height="1" fill="#444"/>
<rect x="139" y="301" width="2" height="1" fill="#9a9a9a"/>
<rect x="137" y="305" width="6" height="1" fill="#444"/>
<rect x="139" y="310" width="2" height="1" fill="#9a9a9a"/>
<rect x="139" y="319" width="2" height="1" fill="#9a9a9a"/>
<rect x="137" y="322" width="6" height="1" fill="#444"/>
<rect x="139" y="327" width="2" height="1" fill="#9a9a9a"/>
<rect x="137" y="331" width="6" height="1" fill="#444"/>
<rect x="139" y="336" width="2" height="1" fill="#9a9a9a"/>
<rect x="137" y="340" width="6" height="1" fill="#444"/>
<rect x="139" y="345" width="2" height="1" fill="#9a9a9a"/>
<rect x="139" y="354" width="2" height="1" fill="#9a9a9a"/>
<rect x="137" y="358" width="6" height="1" fill="#444"/>
<rect x="139" y="363" width="2" height="1" fill="#9a9a9a"/>
<rect x="137" y="367" width="6" height="1" fill="#444"/>
<rect x="139" y="372" width="2" height="1" fill="#9a9a9a"/>
<rect x="137" y="376" width="6" height="1" fill="#444"/>
<rect x="139" y="381" width="2" height="1" fill="#9a9a9a"/>
<rect x="139" y="389" width="2" height="1" fill="#9a9a9a"/>
<rect x="137" y="393" width="6" height="1" fill="#444"/>
<rect x="139" y="398" width="2" height="1" fill="#9a9a9a"/>
<rect x="137" y="402" width="6" height="1" fill="#444"/>
<rect x="139" y="407" width="2" height="1" fill="#9a9a9a"/>
<rect x="137" y="411" width="6" height="1" fill="#444"/>
<rect x="139" y="416" width="2" height="1" fill="#9a9a9a"/>
<rect x="139" y="425" width="2" height="1" fill="#9a9a9a"/>
<rect x="137" y="429" width="6" height="1" fill="#444"/>
<rect x="139" y="434" width="2" height="1" fill="#9a9a9a"/>
<rect x="137" y="438" width="6" height="1" fill="#444"/>
<rect x="139" y="443" width="2" height="1" fill="#9a9a9a"/>
<rect x="137" y="446" width="6" height="1" fill="#444"/>
<rect x="139" y="451" width="2" height="1" fill="#9a9a9a"/>
<rect x="139" y="460" width="2" height="1" fill="#9a9a9a"/>
<rect x="137" y="464" width="6" height="1" fill="#444"/>
<rect x="139" y="469" width="2" height="1" fill="#9a9a9a"/>
<rect x="137" y="473" width="6" height="1" fill="#444"/>
<rect x="139" y="478" width="2" height="1" fill="#9a9a9a"/>
<rect x="137" y="482" width="6" height="1" fill="#444"/>
<rect x="139" y="487" width="2" height="1" fill="#9a9a9a"/>
<rect x="139" y="496" width="2" height="1" fill="#9a9a9a"/>
<rect x="137" y="500" width="6" height="1" fill="#444"/>
<rect x="139" y="505" width="2" height="1" fill="#9a9a9a"/>
<rect x="137" y="508" width="6" height="1" fill="#444"/>
<rect x="139" y="513" width="2" height="1" fill="#9a9a9a"/>
<rect x="137" y="517" width="6" height="1" fill="#444"/>
<rect x="139" y="522" width="2" height="1" fill="#9a9a9a"/>
<rect x="139" y="531" width="2" height="1" fill="#9a9a9a"/>
<rect x="137" y="535" width="6" height="1" fill="#444"/>
<rect x="139" y="540" width="2" height="1" fill="#9a9a9a"/>
<rect x="137" y="544" width="6" height="1" fill="#444"/>
<rect x="139" y="549" width="2" height="1" fill="#9a9a9a"/>
<rect x="137" y="553" width="6" height="1" fill="#444"/>
<rect x="139" y="558" width="2" height="1" fill="#9a9a9a"/>
<rect x="139" y="567" width="2" height="1" fill="#9a9a9a"/>
<rect x="137" y="570" width="6" height="1" fill="#444"/>
<rect x="139" y="575" width="2" height="1" fill="#9a9a9a"/>
<rect x="137" y="579" width="6" height="1" fill="#444"/>
<rect x="139" y="584" width="2" height="1" fill="#9a9a9a"/>
<rect x="137" y="588" width="6" height="1" fill="#444"/>
<rect x="139" y="593" width="2" height="1" fill="#9a9a9a"/>
<rect x="139" y="602" width="2" height="1" fill="#9a9a9a"/>
<rect x="137" y="606" width="6" height="1" fill="#444"/>
<rect x="139" y="611" width="2" height="1" fill="#9a9a9a"/>
<rect x="137" y="615" width="6" height="1" fill="#444"/>
<rect x="139" y="620" width="2" height="1" fill="#9a9a9a"/>

<rect x="135" y="310.6" width="11" height="7" fill="#fff"/>
<text transform="translate(145,314.1) rotate(-90)" x="0" y="0" font-size="12.5" fill="#444" text-anchor="middle" font-family="Liberation Sans">8</text>
<rect x="135" y="346.0" width="11" height="7" fill="#fff"/>
<text transform="translate(145,349.5) rotate(-90)" x="0" y="0" font-size="12.5" fill="#444" text-anchor="middle" font-family="Liberation Sans">6</text>
<rect x="135" y="381.4" width="11" height="7" fill="#fff"/>
<text transform="translate(145,384.9) rotate(-90)" x="0" y="0" font-size="12.5" fill="#444" text-anchor="middle" font-family="Liberation Sans">4</text>
<rect x="135" y="416.9" width="11" height="7" fill="#fff"/>
<text transform="translate(145,420.4) rotate(-90)" x="0" y="0" font-size="12.5" fill="#444" text-anchor="middle" font-family="Liberation Sans">2</text>
<rect x="135" y="452.3" width="11" height="7" fill="#fff"/>
<text transform="translate(145,455.8) rotate(-90)" x="0" y="0" font-size="12.5" fill="#444" text-anchor="middle" font-family="Liberation Sans">0</text>
<rect x="135" y="487.7" width="11" height="7" fill="#fff"/>
<text transform="translate(145,491.2) rotate(-90)" x="0" y="0" font-size="12.5" fill="#444" text-anchor="middle" font-family="Liberation Sans">2</text>
<rect x="135" y="523.2" width="11" height="7" fill="#fff"/>
<text transform="translate(145,526.7) rotate(-90)" x="0" y="0" font-size="12.5" fill="#444" text-anchor="middle" font-family="Liberation Sans">4</text>
<rect x="135" y="558.6" width="11" height="7" fill="#fff"/>
<text transform="translate(145,562.1) rotate(-90)" x="0" y="0" font-size="12.5" fill="#444" text-anchor="middle" font-family="Liberation Sans">6</text>
<rect x="135" y="594.0" width="11" height="7" fill="#fff"/>
<text transform="translate(145,597.5) rotate(-90)" x="0" y="0" font-size="12.5" fill="#444" text-anchor="middle" font-family="Liberation Sans">8</text>
</svg>
<div class="a" style="left:246px;top:341px;width:452px;height:1px;background:repeating-linear-gradient(90deg,#7f7f7f 0 2px,transparent 2px 3px)"></div>
<div class="a" style="left:246px;top:460px;width:452px;height:1px;background:repeating-linear-gradient(90deg,#7f7f7f 0 2px,transparent 2px 3px)"></div>
<div class="a" style="left:246px;top:343px;width:1px;height:117px;background:repeating-linear-gradient(180deg,#7f7f7f 0 2px,transparent 2px 3px)"></div>
<div class="a" style="left:697px;top:343px;width:1px;height:117px;background:repeating-linear-gradient(180deg,#7f7f7f 0 2px,transparent 2px 3px)"></div>
<div class="a" style="left:246px;top:463px;width:452px;height:1px;background:repeating-linear-gradient(90deg,#7f7f7f 0 2px,transparent 2px 3px)"></div>
<div class="a" style="left:246px;top:546px;width:452px;height:1px;background:repeating-linear-gradient(90deg,#7f7f7f 0 2px,transparent 2px 3px)"></div>
<div class="a" style="left:246px;top:465px;width:1px;height:81px;background:repeating-linear-gradient(180deg,#7f7f7f 0 2px,transparent 2px 3px)"></div>
<div class="a" style="left:697px;top:465px;width:1px;height:81px;background:repeating-linear-gradient(180deg,#7f7f7f 0 2px,transparent 2px 3px)"></div>

<div class="t" style="left:349.5px;top:417px;font-size:36.5px;color:#000;-webkit-text-stroke:0.9px #fff;paint-order:normal;transform:scaleX(.935);transform-origin:0 0">Click to add title</div>
<div class="t" style="left:410.6px;top:467.3px;font-size:14.6px;color:#1a1a1a;transform:scaleX(.95);transform-origin:0 0">Click to add subtitle</div>


<div class="t" style="left:7.5px;top:704px;font-size:13.2px;color:#444">Slide 1 of 1</div>
<div class="t" style="left:92.5px;top:704px;font-size:13px;color:#444">Bulgarian</div>
<svg style="left:210px;top:702px" width="14" height="15" viewBox="0 0 14 15">
<path d="M3,4.6 L6.5,1 L10,4.6 Z" fill="#666"/>
<path d="M0,7.5 H13 M0,10.5 H13 M0,13.5 H7" stroke="#666" stroke-width="1.2"/>
</svg>
<div class="t" style="left:229px;top:704px;font-size:13px;color:#444">Notes</div>
<svg style="left:285px;top:702px" width="16" height="16" viewBox="0 0 16 16">
<path d="M0,0.5 H14.5 V10.5 H8 L5,15 V10.5 H0 Z" fill="#6f6f6f"/>
</svg>
<div class="t" style="left:305px;top:704px;font-size:13px;color:#444;transform:scaleX(.965);transform-origin:0 0">Comments</div>
<div class="a" style="left:387px;top:698px;width:41px;height:25px;background:#c6c6c6"></div>
<svg style="left:400px;top:703px" width="15" height="14" viewBox="0 0 15 14">
<rect x="0.5" y="0.5" width="13" height="12" fill="none" stroke="#6a6a6a" stroke-width="1.2"/>
<path d="M3.5,0.5 V12.5 M3.5,8.5 H13.5" stroke="#6a6a6a" stroke-width="1.1"/>
<rect x="6.5" y="3.5" width="4" height="2" fill="none" stroke="#6a6a6a" stroke-width="1.1"/>
</svg>
<svg style="left:441px;top:703px" width="15" height="14" viewBox="0 0 15 14">
<g fill="none" stroke="#6a6a6a" stroke-width="1.2"><rect x="0.5" y="0.5" width="5" height="4"/><rect x="8.5" y="0.5" width="5" height="4"/><rect x="0.5" y="8.5" width="5" height="4"/><rect x="8.5" y="8.5" width="5" height="4"/></g>
</svg>
<svg style="left:482px;top:702px" width="14" height="15" viewBox="0 0 14 15">
<path d="M0.6,1.2 H5 L6.5,2 L8,1.2 H12.4 V11.6 H8 L6.5,13.5 L5,11.6 H0.6 Z" fill="none" stroke="#6f6f6f" stroke-width="1.2"/>
<path d="M6.5,2 V13" stroke="#6f6f6f" stroke-width="1"/>
<path d="M2.3,3.6 H10.7 M2.3,5.6 H10.7 M2.3,7.6 H10.7 M2.3,9.7 H10.7" stroke="#6f6f6f" stroke-width="1"/>
</svg>
<svg style="left:522px;top:703px" width="15" height="14" viewBox="0 0 15 14">
<path d="M1,1.7 H14" stroke="#6f6f6f" stroke-width="2"/>
<path d="M2.6,2.5 V7.5 Q2.6,8.6 3.7,8.6 H11.6 Q12.6,8.6 12.6,7.5 V2.5" fill="none" stroke="#6f6f6f" stroke-width="1.2"/>
<path d="M4.5,5 H10.7" stroke="#6f6f6f" stroke-width="1"/>
<path d="M7.5,8.6 V12.5 M4.8,12.6 H10.2" stroke="#6f6f6f" stroke-width="1.2"/>
</svg>
<div class="a" style="left:556px;top:709px;width:9px;height:2px;background:#5a5a5a"></div>
<div class="a" style="left:569px;top:710px;width:125px;height:1px;background:#a6a6a6"></div>
<div class="a" style="left:631px;top:707px;width:1px;height:7px;background:#a6a6a6"></div>
<div class="a" style="left:588px;top:703px;width:5px;height:14px;background:#5f5f5f"></div>
<svg style="left:698px;top:704px" width="12" height="12" viewBox="0 0 12 12"><path d="M6,0 V12 M0,6 H12" stroke="#5a5a5a" stroke-width="2.2"/></svg>
<div class="t" style="left:724.5px;top:704px;font-size:13px;color:#444;transform:scaleX(.95);transform-origin:0 0">38 %</div>
<svg style="left:770px;top:704px" width="16" height="16" viewBox="0 0 16 16">
<rect x="0.6" y="0.6" width="14" height="14.3" rx="1" fill="none" stroke="#6f6f6f" stroke-width="1.2"/>
<path d="M7.6,2.3 V6.3 M7.6,9.2 V13.3 M2.3,7.7 H6.2 M9,7.7 H13" stroke="#6f6f6f" stroke-width="1"/>
<path d="M6,3.8 L7.6,2 L9.2,3.8 Z M6,11.6 L7.6,13.5 L9.2,11.6 Z M3.8,6.1 L2,7.7 L3.8,9.3 Z M11.4,6.1 L13.2,7.7 L11.4,9.3 Z" fill="#6f6f6f"/>
</svg>

</body></html>
